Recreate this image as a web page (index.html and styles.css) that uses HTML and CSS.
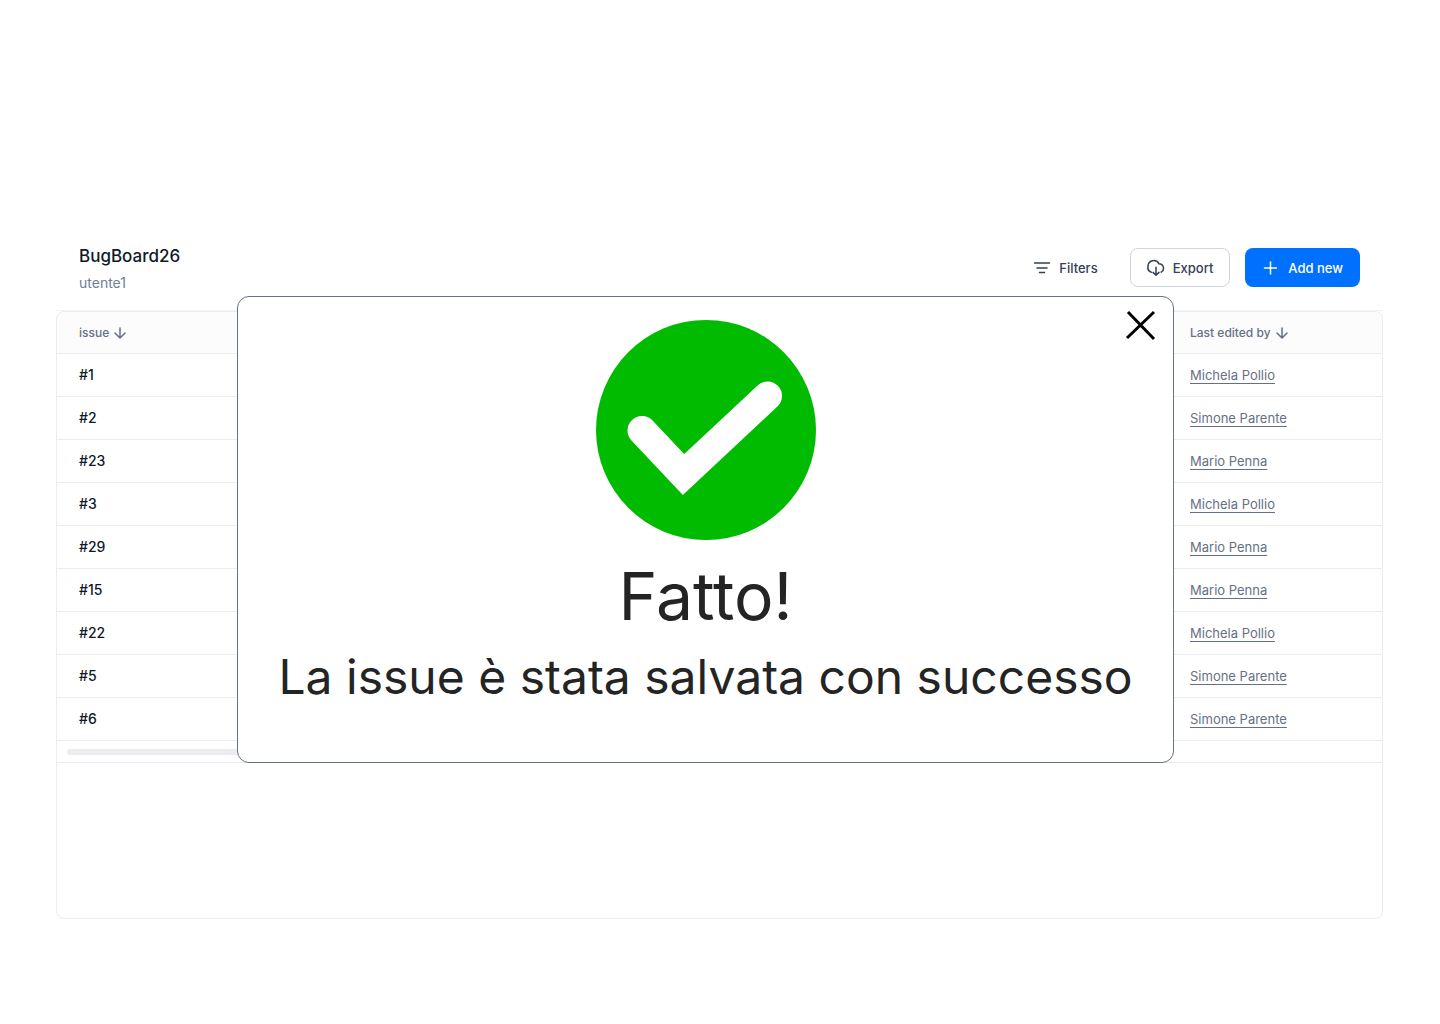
FILE: index.html
```
<!DOCTYPE html>
<html lang="it">
<head>
<meta charset="utf-8">
<meta name="viewport" content="width=device-width, initial-scale=1">
<title>BugBoard26</title>
<link rel="stylesheet" href="styles.css">
</head>
<body>
<main class="page">
  <header class="header">
    <div class="brand">
      <h1 class="title">BugBoard26</h1>
      <p class="user">utente1</p>
    </div>
    <div class="actions">
      <button class="btn" type="button">
        <svg class="icon" width="18" height="18" viewBox="0 0 18 18"><path d="M1.500 4h15M4 9h10M6.500 13.500h5"/></svg>
        Filters
      </button>
      <button class="btn" type="button" data-kind="outline">
        <svg class="icon" width="18" height="18" viewBox="0 0 18 18"><path d="M4.200 13.200A5 5 0 0 1 1 7.500 5.800 5.800 0 0 1 12 4.800a4.500 4.500 0 0 1 2.200 8.400M9 8.200v8M6 13.400l3 2.900 3-2.900"/></svg>
        Export
      </button>
      <button class="btn" type="button" data-kind="primary">
        <svg class="icon" width="18" height="18" viewBox="0 0 18 18"><path d="M8.500 3v12M2.500 9h12"/></svg>
        Add new
      </button>
    </div>
  </header>

  <section class="board">
    <div class="panel">
      <table class="issues">
        <colgroup><col class="col-issue"><col><col class="col-editor"></colgroup>
        <thead>
          <tr>
            <th scope="col"><button class="sort" type="button">issue <svg class="icon" width="12" height="12" viewBox="0 0 12 12"><path d="M6 1v10M1 6l5 5 5-5"/></svg></button></th>
            <td></td>
            <th scope="col"><button class="sort" type="button">Last edited by <svg class="icon" width="12" height="12" viewBox="0 0 12 12"><path d="M6 1v10M1 6l5 5 5-5"/></svg></button></th>
          </tr>
        </thead>
        <tbody>
          <tr><th scope="row">#1</th><td></td><td><a class="editor" href="#">Michela Pollio</a></td></tr>
          <tr><th scope="row">#2</th><td></td><td><a class="editor" href="#">Simone Parente</a></td></tr>
          <tr><th scope="row">#23</th><td></td><td><a class="editor" href="#">Mario Penna</a></td></tr>
          <tr><th scope="row">#3</th><td></td><td><a class="editor" href="#">Michela Pollio</a></td></tr>
          <tr><th scope="row">#29</th><td></td><td><a class="editor" href="#">Mario Penna</a></td></tr>
          <tr><th scope="row">#15</th><td></td><td><a class="editor" href="#">Mario Penna</a></td></tr>
          <tr><th scope="row">#22</th><td></td><td><a class="editor" href="#">Michela Pollio</a></td></tr>
          <tr><th scope="row">#5</th><td></td><td><a class="editor" href="#">Simone Parente</a></td></tr>
          <tr><th scope="row">#6</th><td></td><td><a class="editor" href="#">Simone Parente</a></td></tr>
        </tbody>
      </table>
      <div class="scroll-track"><div class="scroll-thumb"></div></div>
    </div>

    <div class="dialog" role="dialog" aria-labelledby="dialog-title">
      <button class="close" type="button" aria-label="Chiudi">
        <svg width="32" height="32" viewBox="0 0 32 32"><path d="M3 3l26 27M29 3L2 29"/></svg>
      </button>
      <svg class="success" width="220" height="220" viewBox="0 0 220 220">
        <circle class="success-disc" cx="110" cy="110" r="110"/>
        <path class="success-mark" d="M46 110.500L87.500 154.500L171.500 76"/>
      </svg>
      <h2 class="dialog-title" id="dialog-title">Fatto!</h2>
      <p class="dialog-text">La issue è stata salvata con successo</p>
    </div>
  </section>
</main>
</body>
</html>
```
FILE: styles.css
```
* {
  box-sizing: border-box;
}

body {
  margin: 0;
  background: #fff;
  color: #101828;
  font-family: Inter, "Liberation Sans", sans-serif;
  font-size: 14px;
  line-height: 20px;
}

h1, h2, p {
  margin: 0;
  font-weight: 400;
}

button {
  border: 0;
  background: none;
  font: inherit;
  color: inherit;
  cursor: pointer;
}

.page {
  padding: 240px 57px 105px 56px;
}

.icon {
  flex: none;
  fill: none;
  stroke: currentColor;
  stroke-width: 1.5;
  stroke-linecap: round;
  stroke-linejoin: round;
}

/* Header */
.header {
  display: flex;
  justify-content: space-between;
  align-items: flex-start;
  padding: 4px 23px 17px;
  border-bottom: 1px solid #f2f4f7;
}

.title {
  font-size: 17px;
  font-weight: 500;
  line-height: 24px;
}

.user {
  margin-top: 5px;
  color: #718096;
}

.actions {
  display: flex;
  gap: 15px;
  padding-top: 4px;
}

.btn {
  display: flex;
  align-items: center;
  gap: 8px;
  height: 39px;
  padding: 0 16px;
  border: 1px solid transparent;
  border-radius: 8px;
  color: #344054;
  font-size: 13px;
  font-weight: 500;
}

.btn[data-kind="outline"] {
  border-color: #d0d5dd;
}

.btn[data-kind="primary"] {
  background: #0070ff;
  color: #fff;
}

/* Issue table */
.board {
  position: relative;
}

.panel {
  min-height: 608px;
  border: 1px solid #eaecf0;
  border-radius: 8px;
  overflow: hidden;
}

.issues {
  width: 100%;
  table-layout: fixed;
  border-collapse: separate;
  border-spacing: 0;
}

.col-issue {
  width: 180px;
}

.col-editor {
  width: 208px;
}

.issues th,
.issues td {
  height: 43px;
  padding: 0 16px;
  border-bottom: 1px solid #eaecf0;
  text-align: left;
  font-weight: 500;
}

.issues thead th,
.issues thead td {
  height: 42px;
  background: #fcfcfd;
}

.issues th:first-child {
  padding-left: 22px;
}

.sort {
  display: flex;
  align-items: center;
  gap: 5px;
  padding: 0;
  color: #667085;
  font-size: 12px;
}

.issues .editor {
  color: #667085;
  font-size: 13px;
  font-weight: 400;
  text-decoration: underline;
  text-underline-offset: 3px;
}

.scroll-track {
  padding: 8px 10px 7px;
  border-bottom: 1px solid #eaecf0;
}

.scroll-thumb {
  width: 60%;
  height: 6px;
  border-radius: 3px;
  background: #eaecf0;
}

/* Confirmation dialog, laid over the middle columns */
.dialog {
  position: absolute;
  top: -15px;
  left: 181px;
  right: 209px;
  display: flex;
  flex-direction: column;
  align-items: center;
  padding: 23px 24px 60px;
  border: 1px solid #667085;
  border-radius: 12px;
  background: #fff;
  color: #242424;
  text-align: center;
}

.close {
  position: absolute;
  top: 12px;
  right: 16px;
  padding: 0;
  line-height: 0;
}

.close path {
  fill: none;
  stroke: #000;
  stroke-width: 3;
}

.success-disc {
  fill: #00bb00;
}

.success-mark {
  fill: none;
  stroke: #fff;
  stroke-width: 29;
  stroke-linecap: round;
}

.dialog-title {
  margin: 16px 0;
  font-size: 66px;
  line-height: 80px;
}

.dialog-text {
  font-size: 48px;
  line-height: 50px;
}
```
